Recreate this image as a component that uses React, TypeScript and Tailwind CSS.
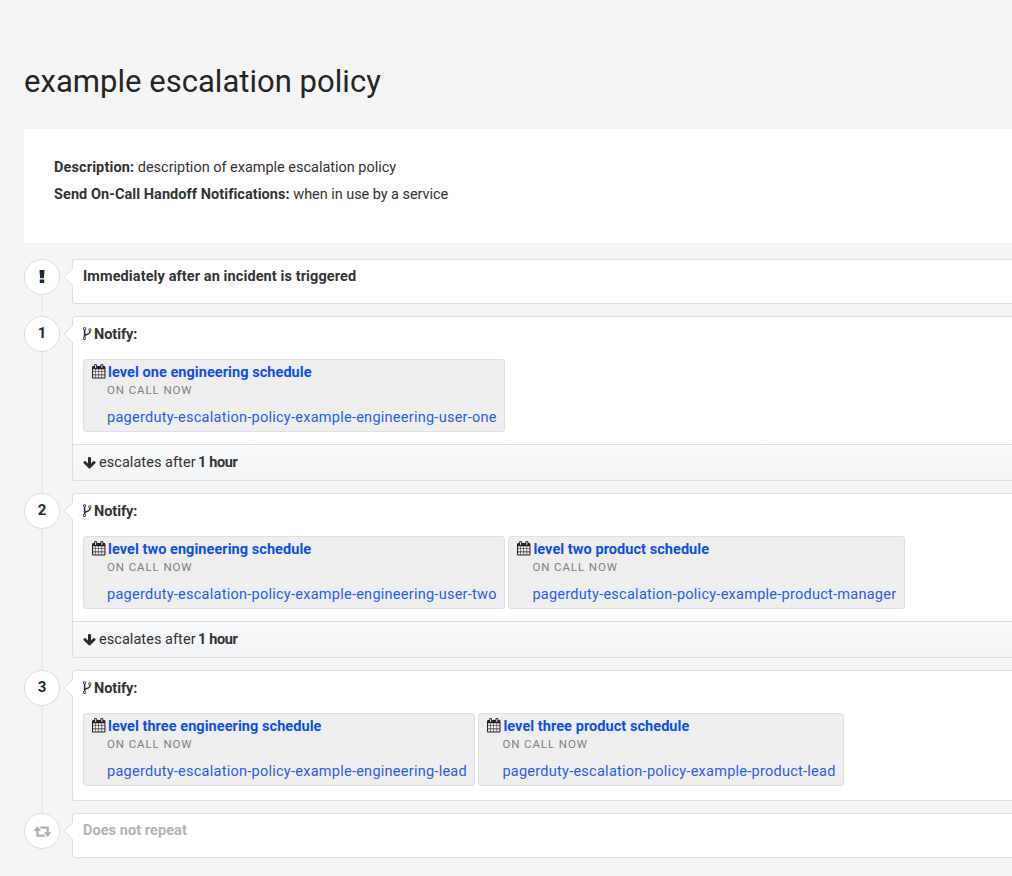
import type { ReactNode } from "react";

const CALENDAR =
  "M128 1664h288v-288h-288v288zM480 1664h320v-288h-320v288zM128 1312h288v-320h-288v320zM480 1312h320v-320h-320v320zM128 928h288v-288h-288v288zM864 1664h320v-288h-320v288zM480 928h320v-288h-320v288zM1248 1664h288v-288h-288v288zM864 1312h320v-320h-320v320zM512 448v-288q0-13-9.5-22.5t-22.5-9.5h-64q-13 0-22.5 9.5t-9.5 22.5v288q0 13 9.5 22.5t22.5 9.5h64q13 0 22.5-9.5t9.5-22.5zM1248 1312h288v-320h-288v320zM864 928h320v-288h-320v288zM1248 928h288v-288h-288v288zM1280 448v-288q0-13-9.5-22.5t-22.5-9.5h-64q-13 0-22.5 9.5t-9.5 22.5v288q0 13 9.5 22.5t22.5 9.5h64q13 0 22.5-9.5t9.5-22.5zM1664 384v1280q0 52-38 90t-90 38h-1408q-52 0-90-38t-38-90v-1280q0-52 38-90t90-38h128v-96q0-66 47-113t113-47h64q66 0 113 47t47 113v96h384v-96q0-66 47-113t113-47h64q66 0 113 47t47 113v96h128q52 0 90 38t38 90z";
const FORK =
  "M288 1472q0-40-28-68t-68-28-68 28-28 68 28 68 68 28 68-28 28-68zm0-1152q0-40-28-68t-68-28-68 28-28 68 28 68 68 28 68-28 28-68zm640 128q0-40-28-68t-68-28-68 28-28 68 28 68 68 28 68-28 28-68zm96 0q0 52-26 96.5t-70 69.5q-2 287-226 414-67 38-203 81-128 40-169.5 71t-41.5 100v26q44 25 70 69.5t26 96.5q0 80-56 136t-136 56-136-56-56-136q0-52 26-96.5t70-69.5v-820q-44-25-70-69.5t-26-96.5q0-80 56-136t136-56 136 56 56 136q0 52-26 96.5t-70 69.5v497q54-26 154-57 55-17 87.5-29.5t70.5-31 59-39.5 40.5-51 28-69.5 8.5-91.5q-44-25-70-69.5t-26-96.5q0-80 56-136t136-56 136 56 56 136z";
const ARROW_DOWN =
  "M1611 832q0 53-37 90l-651 652q-39 37-91 37-53 0-90-37l-651-652q-38-36-38-90 0-53 38-91l74-75q39-37 91-37 53 0 90 37l294 294v-704q0-52 38-90t90-38h128q52 0 90 38t38 90v704l294-294q37-37 90-37 52 0 91 37l75 75q37 39 37 91z";
const RETWEET =
  "M1280 1504q0 13-9.5 22.5t-22.5 9.5h-960q-8 0-13.5-2t-9-7-5.5-8-3-11.5-1-11.5v-600h-192q-26 0-45-19t-19-45q0-24 15-41l320-384q19-22 49-22t49 22l320 384q15 17 15 41 0 26-19 45t-45 19h-192v384h576q16 0 25 11l160 192q7 10 7 21zm640-416q0 20-15 41l-320 384q-20 23-49 23t-49-23l-320-384q-15-17-15-41 0-26 19-45t45-19h192v-384h-576q-16 0-25-12l-160-192q-7-9-7-20 0-13 9.5-22.5t22.5-9.5h960q8 0 13.5 2t9 7 5.5 8 3 11.5 1 11.5v600h192q26 0 45 19t19 45z";

function Glyph({ d, box, className }: { d: string; box: string; className: string }) {
  return (
    <svg viewBox={box} className={`shrink-0 ${className}`} fill="currentColor" aria-hidden="true">
      <path d={d} />
    </svg>
  );
}

function Step({ badge, height, last, children }: { badge: ReactNode; height: string; last?: boolean; children: ReactNode }) {
  return (
    <section className={`flex ${height}`}>
      <div className="relative w-12 shrink-0">
        {!last && <div className="absolute -bottom-3 left-[17px] top-9 w-[2px] bg-[#ededed]" />}
        <div className="flex h-9 w-9 items-center justify-center rounded-full border border-[#dcdcdc] bg-white pb-[2px] text-[15px] font-bold text-[#1b2a41]">
          {badge}
        </div>
      </div>
      <div className="relative flex min-w-0 flex-1 flex-col rounded-l-[3px] border border-r-0 border-[#dcdfe2] bg-white">
        <svg viewBox="0 0 10 18" className="absolute -left-[10px] top-[8px] h-[18px] w-[10px]" aria-hidden="true">
          <path d="M9.5 0.7 L1.2 9 L9.5 17.3" fill="#fff" stroke="#d8dbde" />
        </svg>
        <div className="absolute -left-px top-[9px] h-4 w-[2px] bg-white" />
        {children}
      </div>
    </section>
  );
}

type Schedule = { name: string; user: string; width: string };

function ScheduleCard({ name, user, width }: Schedule) {
  return (
    <div className={`h-[73px] shrink-0 rounded-[3px] border border-[#dedede] bg-[#eeeeee] pl-2 ${width}`}>
      <div className="flex h-6 items-center whitespace-nowrap">
        <Glyph d={CALENDAR} box="0 0 1664 1792" className="mb-px h-[14.5px] w-[13.5px] text-[#222]" />
        <a className="ml-[2.5px] mt-[2px] text-[14.5px] font-bold tracking-[0.06px] text-[#0d50e6]">{name}</a>
      </div>
      <div className="ml-[15px] h-3 text-[11.5px] leading-[13px] tracking-[0.9px] text-[#808080]">ON CALL NOW</div>
      <a className="ml-[15px] mt-[12px] block whitespace-nowrap text-[14.5px] leading-5 tracking-[0.26px] text-[#1f5fe8]">{user}</a>
    </div>
  );
}

function Notify({ schedules }: { schedules: Schedule[] }) {
  return (
    <div className="flex-1 pl-[10px]">
      <div className="flex h-[42px] items-start pt-[8px]">
        <Glyph d={FORK} box="0 0 1024 1792" className="mt-[1px] h-[15px] w-[8.5px] text-[#333]" />
        <span className="ml-[2.5px] text-[14.5px] font-bold leading-5 tracking-[-0.05px]">Notify:</span>
      </div>
      <div className="flex gap-[3px]">
        {schedules.map((s) => (
          <ScheduleCard key={s.name} {...s} />
        ))}
      </div>
    </div>
  );
}

function Escalates() {
  return (
    <div className="flex h-9 items-center rounded-bl-[3px] border-t border-[#d9dde0] bg-linear-to-b from-[#f9fafc] to-[#f2f4f6] pl-[10px] text-[14.5px]">
      <Glyph d={ARROW_DOWN} box="0 0 1664 1792" className="h-[14px] w-[13px] text-[#2b2b2b]" />
      <span className="ml-[3px] tracking-[0.05px]">escalates after</span>
      <b className="ml-[2.5px] tracking-[-0.4px]">1 hour</b>
    </div>
  );
}

export default function App() {
  return (
    <main className="h-[876px] overflow-hidden bg-[#f5f5f5] pl-6 font-[Roboto,sans-serif] text-[14.5px] text-[#333]">
      <h1 className="h-[129px] whitespace-nowrap pt-[62px] text-[31px] leading-10 tracking-[0.03px] text-[#252525]">
        example escalation policy
      </h1>
      <div className="mb-4 h-[114px] bg-white pl-[30px] pt-[25px] leading-[27px]">
        <p><b className="tracking-[0.12px]">Description:</b> <span className="tracking-[-0.02px]">description of example escalation policy</span></p>
        <p><b className="tracking-[0.06px]">Send On-Call Handoff Notifications:</b> <span className="tracking-[-0.05px]">when in use by a service</span></p>
      </div>
      <div className="flex flex-col gap-3">
        <Step
          height="h-[45px]"
          badge={
            <svg viewBox="0 0 6 13" className="h-[13px] w-[6px]" fill="currentColor" aria-hidden="true">
              <path d="M.5 0h5L4.9 8.3H1.1zM.8 9.6h4.4V13H.8z" />
            </svg>
          }
        >
          <b className="pl-[10px] pt-[7px] leading-5 tracking-[0.1px]">Immediately after an incident is triggered</b>
        </Step>
        <Step height="h-[165px]" badge="1">
          <Notify
            schedules={[
              { name: "level one engineering schedule", user: "pagerduty-escalation-policy-example-engineering-user-one", width: "w-[422.4px]" },
            ]}
          />
          <Escalates />
        </Step>
        <Step height="h-[165px]" badge="2">
          <Notify
            schedules={[
              { name: "level two engineering schedule", user: "pagerduty-escalation-policy-example-engineering-user-two", width: "w-[422.4px]" },
              { name: "level two product schedule", user: "pagerduty-escalation-policy-example-product-manager", width: "w-[397px]" },
            ]}
          />
          <Escalates />
        </Step>
        <Step height="h-[131px]" badge="3">
          <Notify
            schedules={[
              { name: "level three engineering schedule", user: "pagerduty-escalation-policy-example-engineering-lead", width: "w-[392.4px]" },
              { name: "level three product schedule", user: "pagerduty-escalation-policy-example-product-lead", width: "w-[366px]" },
            ]}
          />
        </Step>
        <Step height="h-[45px]" last badge={<Glyph d={RETWEET} box="0 0 1920 1792" className="mt-px h-[16px] w-[17px] text-[#b0b0b0]" />}>
          <b className="pl-[10px] pt-[7px] leading-5 tracking-[0.06px] text-[#b3b3b3]">Does not repeat</b>
        </Step>
      </div>
    </main>
  );
}
